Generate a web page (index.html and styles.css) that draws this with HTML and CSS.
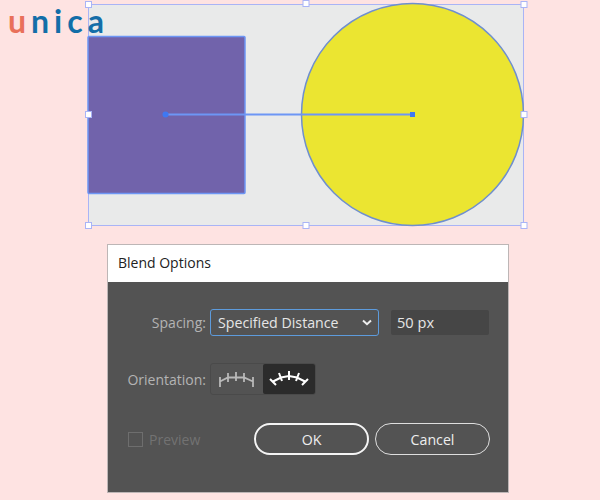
FILE: index.html
```html
<!DOCTYPE html>
<html lang="en">
<head>
    <meta charset="UTF-8">
    <title>Blend Options</title>
    <link rel="stylesheet" href="styles.css">
</head>
<body>
    <div class="logo"><span class="logo-u">u</span>nica</div>
    <svg class="artwork" width="600" height="230" viewBox="0 0 600 230">
        <rect x="88.5" y="4.5" width="435" height="221" fill="#e9eaea" stroke="#a9b4f6"/>
        <rect x="88" y="36.5" width="157" height="157" rx="1" fill="#7163ab" stroke="#6d96f5" stroke-width="1.5"/>
        <circle cx="412.5" cy="114.5" r="111" fill="#ebe531" stroke="#6f8fce" stroke-width="1.5"/>
        <line x1="165" y1="114.5" x2="412" y2="114.5" stroke="#6d96f5" stroke-width="2"/>
        <circle cx="165.5" cy="114.5" r="3" fill="#3f78f2"/>
        <rect x="410" y="112" width="5" height="5" fill="#3f78f2"/>
        <g fill="#fff" stroke="#a9b4f6">
            <rect x="85.5" y="1.5" width="6" height="6"/>
            <rect x="303" y="0.5" width="6" height="6"/>
            <rect x="521" y="1.5" width="6" height="6"/>
            <rect x="85.5" y="111.5" width="6" height="6"/>
            <rect x="521" y="111.5" width="6" height="6"/>
            <rect x="85.5" y="222.5" width="6" height="6"/>
            <rect x="303" y="222.5" width="6" height="6"/>
            <rect x="521" y="222.5" width="6" height="6"/>
        </g>
    </svg>

    <div class="dialog">
        <div class="dialog-title">Blend Options</div>
        <div class="dialog-body">
            <div class="row row-spacing">
                <span class="row-label">Spacing:</span>
                <div class="select">
                    <span>Specified Distance</span>
                    <svg width="10" height="7" viewBox="0 0 10 7"><path d="M1 1.5 5 5.2 9 1.5" fill="none" stroke="#eee" stroke-width="2"/></svg>
                </div>
                <div class="number-input">50 px</div>
            </div>
            <div class="row row-orientation">
                <span class="row-label">Orientation:</span>
                <div class="segments">
                    <div class="segment">
                        <svg width="40" height="20" viewBox="0 0 40 20">
                            <path d="M3 12.5 11 8.5H19L27 8.5 36 12.5M3 8V18M11 4V13M19 3V12M27 4V13M36 8V18" fill="none" stroke="#b9b9b9" stroke-width="1.8"/>
                        </svg>
                    </div>
                    <div class="segment segment-active">
                        <svg width="44" height="20" viewBox="0 0 44 20">
                            <path d="M6 12.5 14 8.5 22 7 30 8.5 38 12.5M3 10 9 16M12 4 15 12M22 2V11M32 4 29 12M41 10 35 16" fill="none" stroke="#fff" stroke-width="2"/>
                        </svg>
                    </div>
                </div>
            </div>
            <div class="row row-actions">
                <label class="preview"><span class="checkbox"></span>Preview</label>
                <button class="btn btn-primary">OK</button>
                <button class="btn">Cancel</button>
            </div>
        </div>
    </div>
</body>
</html>
```

FILE: styles.css
```css
* {
    box-sizing: border-box;
}
body {
    margin: 0;
    height: 500px;
    overflow: hidden;
    background-color: #fee3e2;
    font-family: 'Open Sans', sans-serif;
    position: relative;
}
.logo {
    position: absolute;
    top: 0;
    left: 8px;
    font-family: 'Lato', sans-serif;
    font-size: 32px;
    font-weight: 700;
    line-height: 42px;
    letter-spacing: 5px;
    color: #136ea8;
}
.logo-u {
    color: #e9705a;
}
.artwork {
    display: block;
}
.dialog {
    width: 402px;
    height: 249px;
    margin: 14px 0 0 107px;
    border: 1px solid #bdb6b6;
    background-color: #535353;
}
.dialog-title {
    height: 37px;
    padding-left: 10px;
    background-color: #fff;
    color: #222;
    font-size: 14px;
    line-height: 36px;
}
.dialog-body {
    padding-top: 27px;
    font-size: 14px;
    color: #e6e6e6;
}
.row {
    display: flex;
    align-items: center;
}
.row-label {
    width: 98px;
    margin-right: 4px;
    text-align: right;
    color: #b4b4b4;
}
.select {
    display: flex;
    align-items: center;
    justify-content: space-between;
    width: 169px;
    height: 27px;
    padding: 0 6px 0 7px;
    border: 1.5px solid #5d9bdc;
    border-radius: 3px;
    font-size: 14.2px;
}
.number-input {
    width: 98px;
    height: 25px;
    margin-left: 12px;
    padding-left: 6px;
    background-color: #464646;
    border-radius: 2px;
    font-size: 14.6px;
    line-height: 25px;
}
.row-orientation {
    margin-top: 27px;
}
.segments {
    display: flex;
    height: 32px;
    border: 1px solid #4a4a4a;
    border-radius: 3px;
}
.segment {
    display: flex;
    align-items: center;
    justify-content: center;
    width: 52px;
}
.segment-active {
    width: 52px;
    background-color: #2b2b2b;
    border-radius: 2px;
}
.row-actions {
    margin-top: 28px;
    padding-left: 20px;
}
.preview {
    display: flex;
    align-items: center;
    width: 126px;
    color: #727272;
}
.checkbox {
    width: 15px;
    height: 15px;
    margin-right: 6px;
    border: 1px solid #6e6e6e;
}
.btn {
    width: 115px;
    height: 32px;
    margin-right: 6px;
    padding: 0;
    background: none;
    border: 1.5px solid #dedede;
    border-radius: 16px;
    color: #eee;
    font-family: 'Open Sans', sans-serif;
    font-size: 14.2px;
    font-weight: 500;
}
.btn-primary {
    border: 2.5px solid #f4f4f4;
}
```
